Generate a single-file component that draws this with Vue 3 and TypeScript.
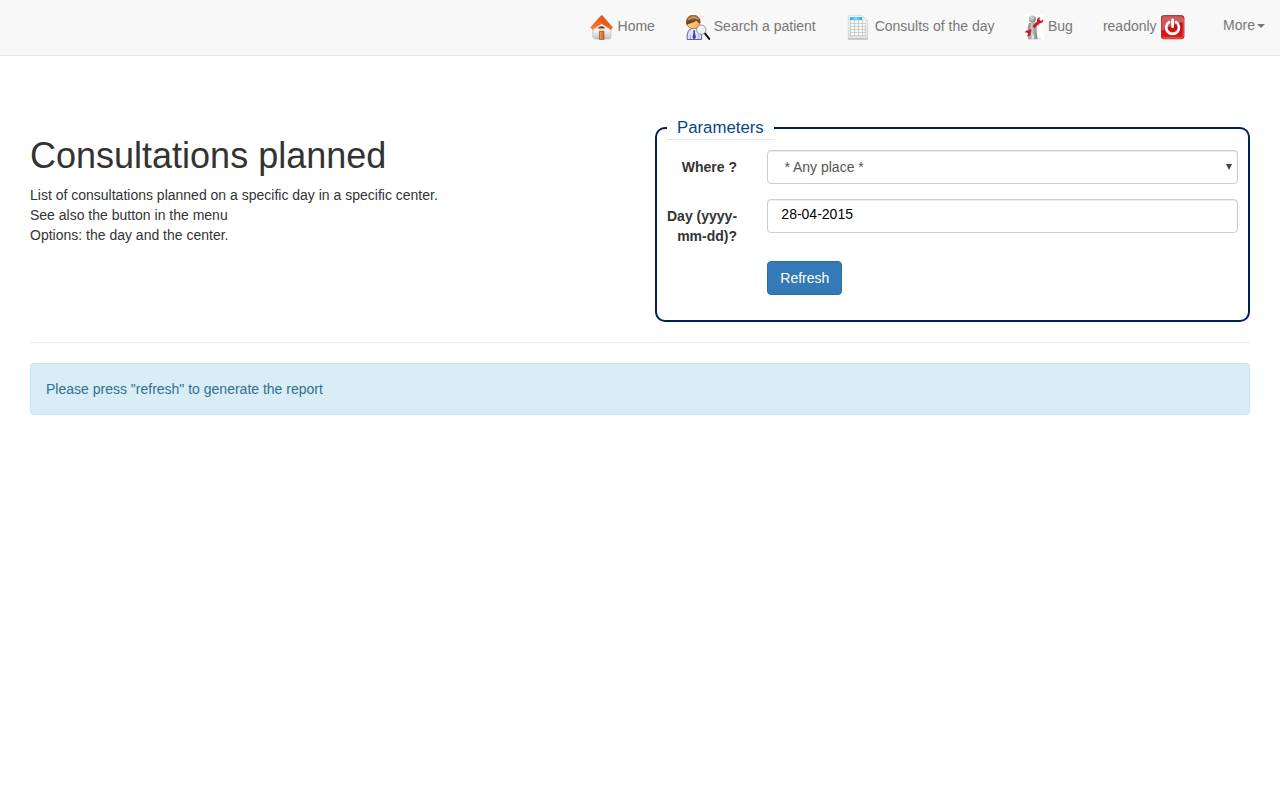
<script setup lang="ts">
import { ref } from 'vue'

interface Place {
  id: string
  label: string
}

const places: Place[] = [{ id: 'any', label: '* Any place *' }]
const place = ref<string>('any')
const day = ref<string>('28-04-2015')
</script>

<template>
  <nav class="navbar">
    <a class="item">
      <svg class="icon" width="25" height="25" viewBox="-.4 0 25 25">
        <defs>
          <linearGradient id="roof" x1="0" y1="0" x2="0" y2="1">
            <stop offset="0" stop-color="#ee5a12" />
            <stop offset=".6" stop-color="#f7671c" />
            <stop offset="1" stop-color="#fb8a45" />
          </linearGradient>
          <linearGradient id="wall" x1="0" y1="0" x2="0" y2="1">
            <stop offset="0" stop-color="#ffffff" />
            <stop offset=".6" stop-color="#f1f1ee" />
            <stop offset="1" stop-color="#bfc3c2" />
          </linearGradient>
        </defs>
        <path d="M3.4 13 12.3 4 21.6 13V21.4Q21.4 23.8 19.4 24H6.2Q3.6 23.8 3.4 21.4Z" fill="url(#wall)" stroke="#b4b4b2" stroke-width=".6" />
        <path d="M12.3.5Q11.6.6 10.8 1.5L1.2 12.6 3.4 14.6 12.4 8.6 21.4 14.6 23.3 12.6 13.8 1.5Q13 .6 12.3.5Z" fill="url(#roof)" stroke="#cc5a25" stroke-width=".4" />
        <path d="M12.3 1V8.4L21.2 14.2 23 12.4Z" fill="#e04c0c" opacity=".5" />
        <path d="M9 13.8V12.2Q12.2 10.2 15.2 12.2V13.8Z" fill="#63442f" />
        <path d="M9.6 13.9H14.8" stroke="#d8c08e" stroke-width="1" />
        <path d="M10 16.2H14.6V24.4H10Z" fill="#e0742e" stroke="#8d5533" stroke-width=".7" />
        <path d="M11.4 17V24" stroke="#f3a05a" stroke-width="1" />
      </svg>
      Home
    </a>
    <a class="item">
      <svg class="icon" width="25" height="25" viewBox="-.7 0 25 25">
        <defs>
          <linearGradient id="face" x1="0" y1="0" x2="1" y2="1">
            <stop offset="0" stop-color="#ffeebf" />
            <stop offset="1" stop-color="#f5a14a" />
          </linearGradient>
          <linearGradient id="hair" x1="0" y1="0" x2="0" y2="1">
            <stop offset="0" stop-color="#b9854f" />
            <stop offset=".6" stop-color="#84491c" />
            <stop offset="1" stop-color="#6a350d" />
          </linearGradient>
        </defs>
        <path d="M1.5 24.5V20Q1.8 14.8 5.8 13.6H12Q15.6 14.8 15.9 20V24.5Z" fill="#dfe3fb" stroke="#4a55a3" stroke-width=".9" />
        <path d="M4.6 19.5V24M13 19.5V24" stroke="#8f9ad8" stroke-width=".8" />
        <path d="M5.6 13.8 8.3 17.4 11.2 13.8Z" fill="#fff" />
        <path d="M7.4 15.2H9.6L9.2 17.2 10.2 22.7 8.5 24.3 6.8 22.7 7.8 17.2Z" fill="#3341a0" />
        <ellipse cx="7.6" cy="7.2" rx="6.7" ry="6.7" fill="url(#face)" stroke="#a8662a" stroke-width=".7" />
        <path d="M1 9.4C0 3.4 3 .3 7.6.3 12.3.3 15.2 3.4 14.2 8.2 12.6 7.6 11.4 6.6 10.6 5.4 8.2 7.2 4.4 8 1 9.4Z" fill="url(#hair)" stroke="#6a3f1c" stroke-width=".5" />
        <path d="M2.2 4.7Q7.4.8 13 4" fill="none" stroke="#cfa878" stroke-width="1.3" />
        <path d="M19.2 18.4 23.6 24" stroke="#111" stroke-width="2" stroke-linecap="round" />
        <circle cx="15.6" cy="14.7" r="4.7" fill="#eaf2f0" stroke="#8b9090" stroke-width=".9" />
        <path d="M12.8 14.4Q13.6 12 15.8 11.8" fill="none" stroke="#fff" stroke-width="1.5" />
      </svg>
      Search a patient
    </a>
    <a class="item">
      <svg class="icon" width="25" height="25" viewBox="0 0 25 25">
        <defs>
          <linearGradient id="sheet" x1="0" y1="0" x2="0" y2="1">
            <stop offset="0" stop-color="#ffffff" />
            <stop offset="1" stop-color="#dedede" />
          </linearGradient>
          <linearGradient id="head" x1="0" y1="0" x2="1" y2="0">
            <stop offset="0" stop-color="#2cb1ed" />
            <stop offset=".5" stop-color="#69dcff" />
            <stop offset="1" stop-color="#25a8e8" />
          </linearGradient>
        </defs>
        <path d="M2.3.7H16.5L21.7 6V23.8H2.3Z" fill="url(#sheet)" stroke="#ccc" stroke-width=".7" />
        <path d="M2 24.1H22" stroke="#a6a6a6" stroke-width=".8" />
        <path d="M4.2 5H19.5V21H4.2Z" fill="#fafafa" />
        <path d="M4 8.5H19.5M4 11.5H19.5M4 14.5H19.5M4 17.5H19.5M4 20.5H19.5M4.5 5V20.8M8.5 5V20.8M12.5 5V20.8M16.5 5V20.8M19.3 7V20.8" fill="none" stroke="#bcc1c4" stroke-width=".75" />
        <rect x="4" y="2" width="12" height="3.2" fill="url(#head)" />
        <path d="M16.5.8V5.8H21.5Z" fill="#f4f4f4" stroke="#cfcfcf" stroke-width=".5" />
      </svg>
      Consults of the day
    </a>
    <a class="item">
      <svg class="icon bug" width="20" height="25" viewBox="0 0 20 25">
        <defs>
          <linearGradient id="body" x1="0" y1="0" x2="1" y2="0">
            <stop offset="0" stop-color="#8f8f8f" />
            <stop offset=".4" stop-color="#c9c9c9" />
            <stop offset="1" stop-color="#7d7d7d" />
          </linearGradient>
          <radialGradient id="skull" cx=".4" cy=".3" r=".75">
            <stop offset="0" stop-color="#dcdcdc" />
            <stop offset="1" stop-color="#808080" />
          </radialGradient>
        </defs>
        <rect width="20" height="25" fill="#fff" />
        <ellipse cx="11" cy="23.6" rx="6.5" ry="1.2" fill="#dcdcdc" />
        <path d="M5.2 8.2Q8.5 6.4 12 8L13 9.5 12.4 15 13.6 23.6 10.2 24.2 8.9 17.5 8 24.3 4 24.4 5.2 16.5Z" fill="url(#body)" />
        <path d="M5.8 8.8 4.6 13.4 6.4 15.2M12 8.6 14.2 9.6 15.2 7.6" fill="none" stroke="#9a9a9a" stroke-width="2.2" stroke-linecap="round" stroke-linejoin="round" />
        <circle cx="8.4" cy="4" r="3.6" fill="url(#skull)" />
        <path d="M9.4 12.3 14.4 7" stroke="#c91a25" stroke-width="2.8" />
        <path d="M4.8 17 6.8 14.9" stroke="#c91a25" stroke-width="2.4" />
        <path d="M16.4 2.2C14.2 2.2 12.6 3.8 13 5.8 13.4 8 15.4 8.8 17.2 8 18.8 7.3 19.6 5.8 19.3 4.4L16.8 6 15.2 4.6Z" fill="#cc1824" />
        <path d="M.8 17.4C1.8 15.4 3.8 14.8 5.4 15.8 7.2 17 7.2 19.2 6 20.4 5 21.4 3.8 21.5 2.8 21.2L4.4 19 3 17.5Z" fill="#c41622" />
      </svg>
      Bug
    </a>
    <a class="item">
      readonly
      <svg class="icon" width="25" height="25" viewBox=".8 0 25 25">
        <defs>
          <linearGradient id="power" x1="0" y1="0" x2="0" y2="1">
            <stop offset="0" stop-color="#b9191c" />
            <stop offset=".5" stop-color="#c40d10" />
            <stop offset="1" stop-color="#e81a1a" />
          </linearGradient>
        </defs>
        <rect x="1" y=".6" width="22.8" height="23.2" rx="2.5" fill="url(#power)" stroke="#a51a1d" stroke-width=".8" />
        <path d="M1.5 3Q1.5 1.2 3.2 1.2H21.6Q23.2 1.2 23.2 2.8V7Q14 8.5 1.5 16Z" fill="#fff" opacity=".3" />
        <path d="M2 22.9H23M23 3V22" fill="none" stroke="#f58a80" stroke-width=".7" />
        <path d="M8.9 7.2A6.4 6.4 0 1 0 15.9 7.2" fill="none" stroke="#fff" stroke-width="2.7" stroke-linecap="round" />
        <path d="M12.4 4.8V11.8" stroke="#fff" stroke-width="2.7" stroke-linecap="round" />
      </svg>
    </a>
    <a class="item more">More<span class="caret"></span></a>
  </nav>

  <main class="page">
    <section class="intro-row">
      <div class="intro">
        <h1>Consultations planned</h1>
        <p>
          List of consultations planned on a specific day in a specific center.<br />
          See also the button in the menu<br />
          Options: the day and the center.
        </p>
      </div>
      <fieldset class="params">
        <legend>Parameters</legend>
        <div class="row">
          <label for="place">Where ?</label>
          <div class="field">
            <select id="place" v-model="place" class="control select">
              <option v-for="p in places" :key="p.id" :value="p.id">{{ p.label }}</option>
            </select>
            <svg class="arrow" width="6" height="6" viewBox="0 0 6 6"><path d="M0 0H6L3 6Z" fill="#444" /></svg>
          </div>
        </div>
        <div class="row">
          <label for="day">Day (yyyy-<br />mm-dd)?</label>
          <div class="field">
            <input id="day" v-model="day" class="control day" type="text" />
          </div>
        </div>
        <div class="row">
          <span class="spacer"></span>
          <button class="refresh" type="button">Refresh</button>
        </div>
      </fieldset>
    </section>
    <hr />
    <div class="alert">Please press "refresh" to generate the report</div>
  </main>
</template>

<style>
body {
  margin: 0;
  background: #fff;
}
</style>

<style scoped>
* {
  box-sizing: border-box;
}
.navbar,
.page {
  font: 14px/20px "Liberation Sans", Arial, sans-serif;
  color: #333;
}
.navbar {
  height: 56px;
  display: flex;
  justify-content: flex-end;
  background: #f8f8f8;
  border-bottom: 1px solid #e7e7e7;
}
.item {
  padding: 15px;
  color: #777;
  white-space: nowrap;
}
.icon {
  vertical-align: middle;
}
.bug {
  margin-left: -1px;
  margin-right: 0.6px;
}
.more {
  margin-left: 7.6px;
}
.caret {
  display: inline-block;
  margin-left: 2px;
  vertical-align: middle;
  border-top: 4px solid #777;
  border-left: 4px solid transparent;
  border-right: 4px solid transparent;
}
.page {
  padding: 60px 30px 0;
}
.intro-row {
  display: grid;
  grid-template-columns: 595px 595px;
  gap: 30px;
}
.intro {
  padding-top: 20px;
}
h1 {
  margin: 0 0 10px;
  font-size: 36px;
  font-weight: 500;
  line-height: 39px;
}
p {
  margin: 0;
}
.params {
  min-width: 0;
  margin: 0;
  padding: 10px;
  border: 2px solid #001f5f;
  border-radius: 10px;
}
legend {
  padding: 0 10px;
  border-bottom: 1px solid #e5e5e5;
  font-size: 16.8px;
  line-height: 23px;
  color: #04468c;
}
.row {
  display: flex;
  align-items: flex-start;
  gap: 30px;
  margin-bottom: 15px;
}
label,
.spacer {
  flex: 0 0 70px;
}
label {
  padding-top: 7px;
  font-weight: 700;
  text-align: right;
  white-space: nowrap;
}
.field {
  position: relative;
  width: 471px;
}
.control {
  display: block;
  width: 100%;
  height: 34px;
  margin: 0;
  border: 1px solid #ccc;
  border-radius: 4px;
  background: #fff;
  box-shadow: inset 0 1px 1px rgba(0, 0, 0, 0.075);
  font: inherit;
}
.select {
  appearance: none;
  padding: 6px 16.4px;
  color: #555;
}
.day {
  padding: 4px 13.3px 8px;
  color: #000;
}
.arrow {
  position: absolute;
  right: 6px;
  top: 14px;
}
.refresh {
  height: 34px;
  padding: 6px 12px 6px 12.3px;
  border: 1px solid #2e6da4;
  border-radius: 4px;
  background: #337ab7;
  color: #fff;
  font: inherit;
}
hr {
  margin: 20px 0;
  border: 0;
  border-top: 1px solid #eee;
}
.alert {
  padding: 15px;
  border: 1px solid #bce8f1;
  border-radius: 4px;
  background: #d9edf7;
  color: #31708f;
}
</style>
